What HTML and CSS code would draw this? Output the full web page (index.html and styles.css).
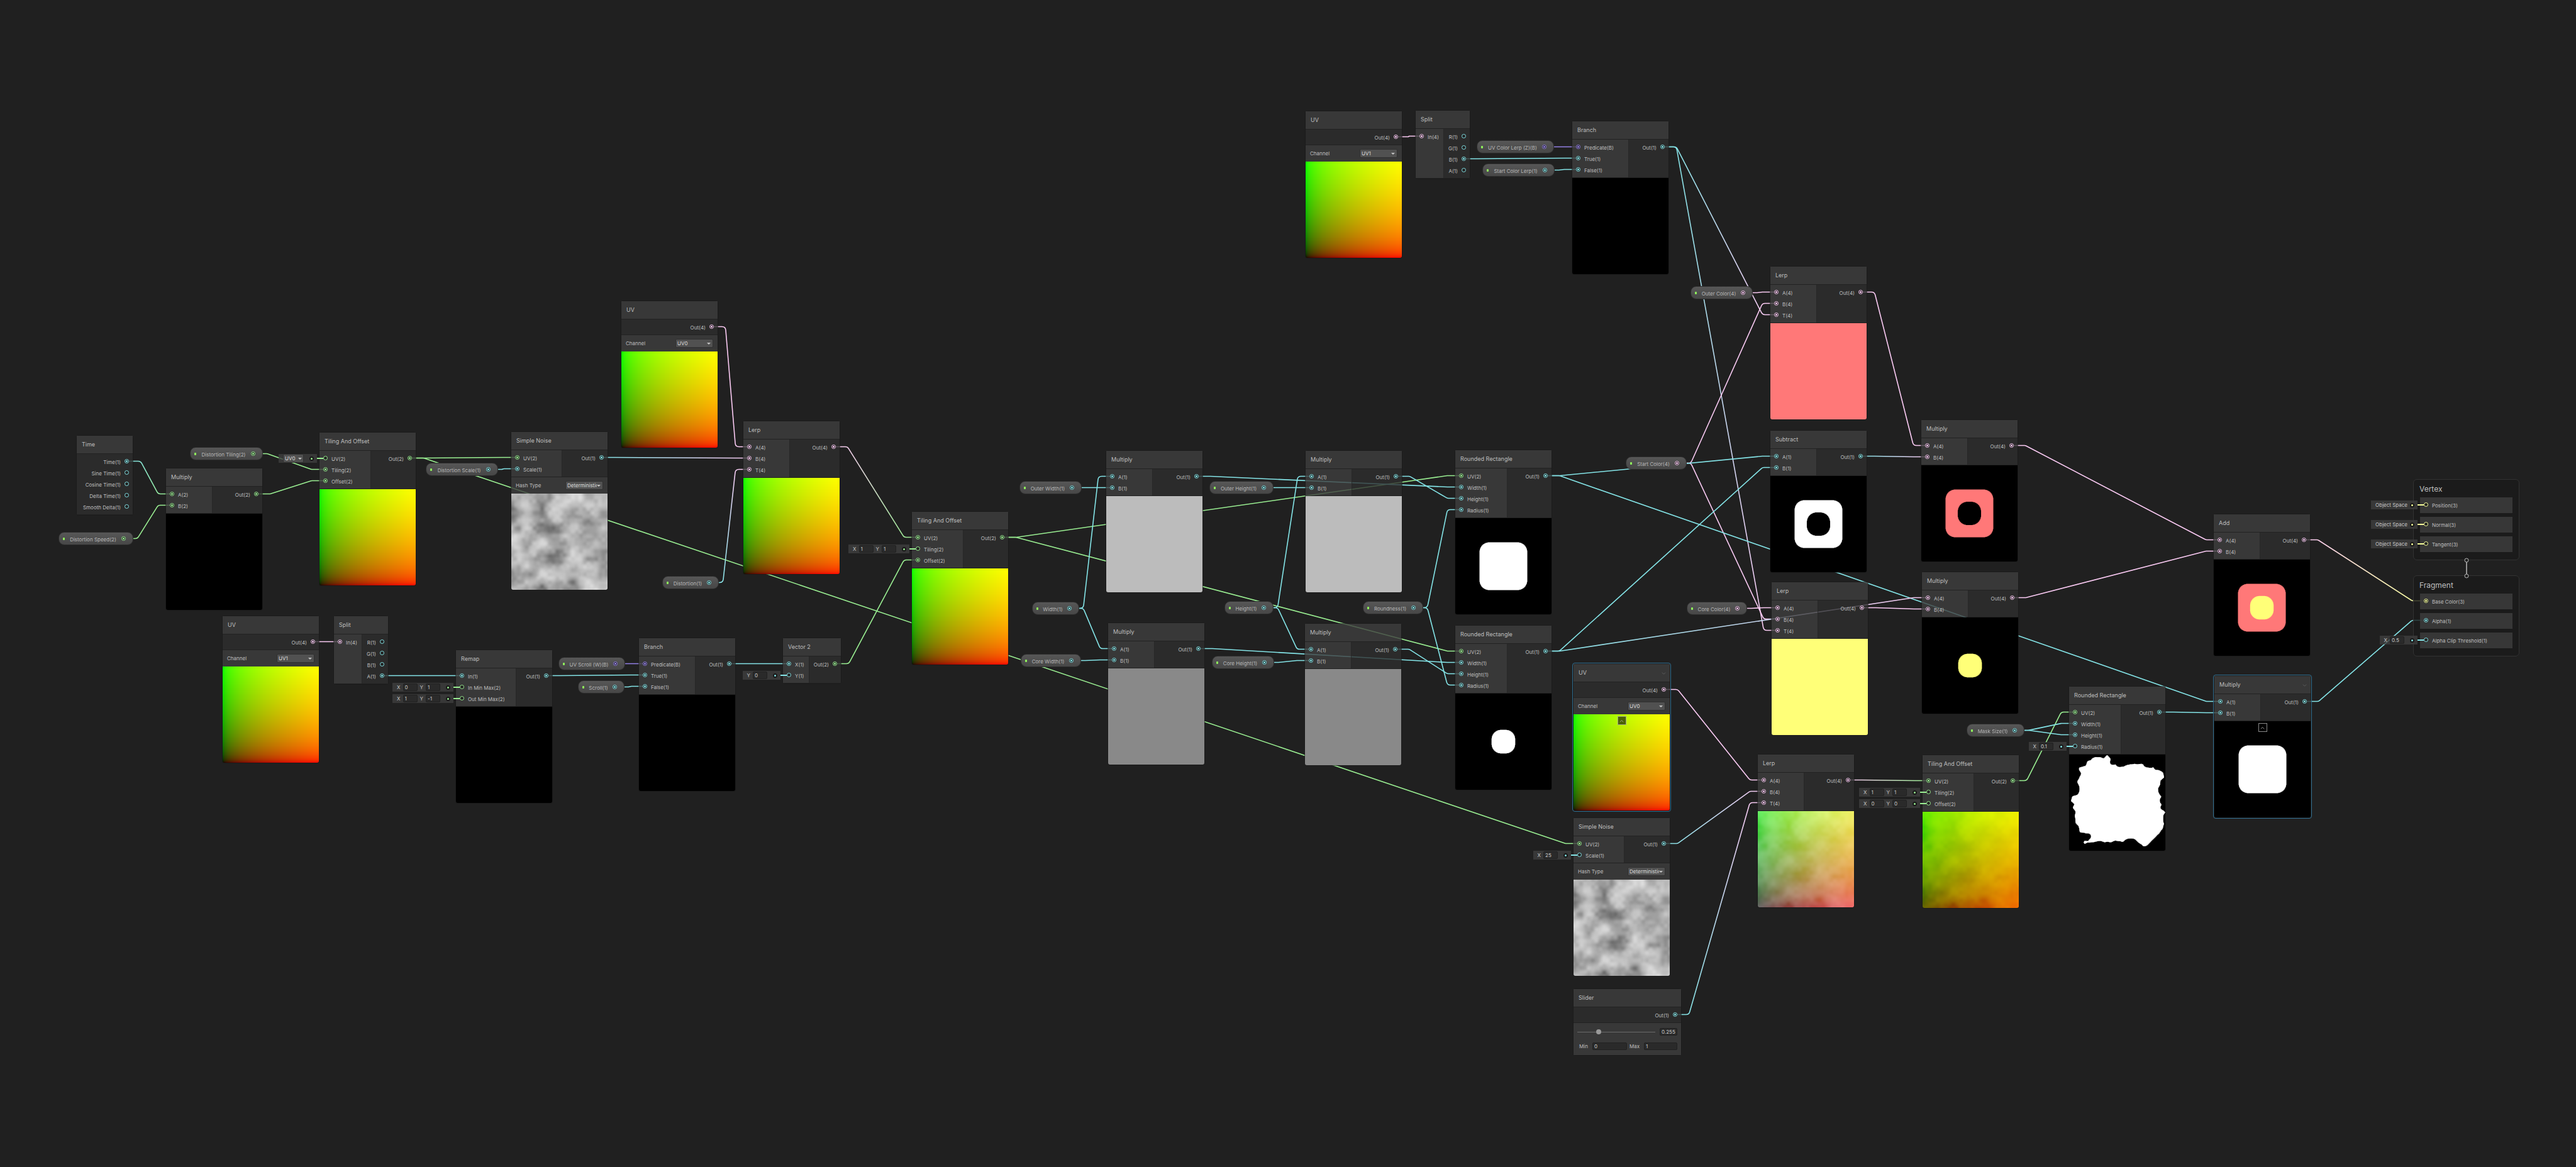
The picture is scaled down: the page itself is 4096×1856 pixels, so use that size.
FILE: index.html
```html
<!DOCTYPE html>
<html lang="en">
<head>
<meta charset="utf-8">
<meta name="viewport" content="width=device-width, initial-scale=1">
<title>Shader Graph</title>
<link rel="stylesheet" href="styles.css">
</head>
<body>
<main class="graph" id="graph">
  <svg class="edges" id="edges" aria-hidden="true"></svg>
  <svg class="edges stack-link" aria-hidden="true">
    <path d="M3922 894V913"/>
    <circle cx="3922" cy="891" r="3"/>
    <circle cx="3922" cy="916" r="3"/>
  </svg>
</main>
<script src="graph.js"></script>
</body>
</html>
```
FILE: styles.css
```css
* { box-sizing: border-box; }

body {
  margin: 0;
  background: #202020;
  color: #bebebe;
  font-family: Inter, "Liberation Sans", sans-serif;
  font-size: 8px;
  line-height: 18px;
}

.graph {
  position: relative;
  min-height: 100vh;
  overflow: hidden;
}

.edges {
  position: absolute;
  inset: 0;
  width: 100%;
  height: 100%;
}

.edges path { fill: none; stroke-width: 1.6; }

.stack-link {
  z-index: 1;
  fill: #202020;
  stroke: #b4b4b4;
  pointer-events: none;
}

/* port value types */
.type-1 { color: #84e4e7; }
.type-2 { color: #9aef92; }
.type-3 { color: #f6ff9a; }
.type-4 { color: #fbcbf4; }
.type-B { color: #9481e6; }

/* nodes */
.node {
  position: absolute;
  border-radius: 3px;
  box-shadow: 0 0 0 1px rgba(25, 25, 25, 0.6);
}

.node-title {
  display: flex;
  align-items: center;
  justify-content: space-between;
  height: 28px;
  margin: 0;
  padding: 0 6px 0 8px;
  background: rgba(63, 63, 63, 0.8);
  font-size: 9px;
  font-weight: 400;
}

.chevron {
  width: 7px;
  height: 7px;
  fill: none;
  stroke: #606060;
}

.node-body {
  display: flex;
  border-top: 1px solid rgba(35, 35, 35, 0.8);
  border-bottom: 1px solid rgba(35, 35, 35, 0.8);
}

.inputs, .outputs {
  flex: 1 1 auto;
  padding: 3px 6px;
}

.inputs {
  padding-right: 7px;
  background: rgba(63, 63, 63, 0.8);
  border-right: 1px solid rgba(35, 35, 35, 0.8);
}

.outputs { background: rgba(46, 46, 46, 0.8); }

.port {
  position: relative;
  display: flex;
  gap: 6px;
  height: 18px;
  white-space: nowrap;
}

.outputs .port { justify-content: flex-end; }
.port-name { padding-top: 1px; }

.pin {
  display: flex;
  align-items: center;
  justify-content: center;
  flex: none;
  width: 7px;
  height: 7px;
  margin-top: 5px;
  border: 1px solid currentColor;
  border-radius: 50%;
  background: #212121;
}

.pin.linked::after {
  content: "";
  width: 3px;
  height: 3px;
  border-radius: 50%;
  background: currentColor;
}

/* node settings */
.setting {
  display: flex;
  align-items: center;
  justify-content: space-between;
  height: 26px;
  padding: 0 7px;
  background: rgba(63, 63, 63, 0.8);
}

.dropdown {
  position: relative;
  display: flex;
  width: 60px;
}

.dropdown select {
  width: 100%;
  height: 14px;
  padding: 0 9px 0 2px;
  border: 1px solid #303030;
  border-radius: 2px;
  background: #515151;
  color: #dcdcdc;
  font: inherit;
  line-height: 12px;
  appearance: none;
}

.dropdown::after {
  content: "";
  position: absolute;
  top: 6px;
  right: 4px;
  border: 3px solid transparent;
  border-top-color: #c4c4c4;
  border-bottom: 0;
}

.field {
  width: 23px;
  height: 12px;
  padding: 0 2px;
  border: 1px solid #212121;
  border-radius: 2px;
  background: #2a2a2a;
  color: #c8c8c8;
  font: inherit;
  line-height: 10px;
}

.slider-settings {
  padding: 7px 6px;
  background: rgba(63, 63, 63, 0.8);
}

.slider-row, .range-row {
  display: flex;
  align-items: center;
  height: 14px;
}

.slider-row { gap: 7px; }
.slider-row .field { width: 28px; }
.range-row { gap: 4px; margin-top: 9px; padding-left: 3px; }
.range-row label { display: flex; align-items: center; flex: 1; gap: 7px; }
.range-row .field { flex: 1; min-width: 0; }

.slider {
  flex: 1;
  min-width: 0;
  height: 10px;
  margin: 0;
  background: transparent;
  appearance: none;
}

.slider::-webkit-slider-runnable-track {
  height: 1px;
  background: #6a6a6a;
}

.slider::-webkit-slider-thumb {
  width: 8px;
  height: 8px;
  margin-top: -4px;
  border-radius: 50%;
  background: #999;
  appearance: none;
}

/* previews */
.preview {
  position: relative;
  display: flex;
  justify-content: center;
}

.preview canvas {
  width: 100%;
  border-radius: 0 0 3px 3px;
}

.collapse {
  position: absolute;
  top: 3px;
  display: flex;
  align-items: center;
  justify-content: center;
  width: 14px;
  height: 14px;
  padding: 0;
  border: 1px solid rgba(196, 196, 196, 0.7);
  background: rgba(0, 0, 0, 0.6);
}

.collapse .chevron { stroke: #b0b0b0; }

.node.hovered::before {
  content: "";
  position: absolute;
  inset: -2px;
  border: 1px solid #2f6d8f;
  border-radius: 4px;
  pointer-events: none;
}

/* default values attached to unlinked inputs */
.default {
  position: absolute;
  top: 2px;
  right: 100%;
  display: flex;
  align-items: center;
  gap: 4px;
  height: 14px;
  margin-right: 10px;
  padding: 0 5px 0 7px;
  background: rgba(63, 63, 63, 0.8);
  color: #c4c4c4;
}

.default label { display: flex; align-items: center; gap: 4px; }
.default .dropdown { width: 33px; }
.default .dropdown::after { right: 3px; }
.default .socket {
  display: flex;
  align-items: center;
  justify-content: center;
  width: 7px;
  height: 7px;
  margin-left: 5px;
  border-radius: 50%;
  background: #181818;
}
.default .socket::after {
  content: "";
  width: 3px;
  height: 3px;
  border-radius: 50%;
  background: currentColor;
}
.default.text .socket { margin-left: 0; }
.default .wire {
  position: absolute;
  top: 6px;
  left: 100%;
  width: 10px;
  height: 2px;
  background: currentColor;
}

/* property pills */
.pill {
  position: absolute;
  display: flex;
  align-items: center;
  height: 21px;
  padding: 0 11px 0 6px;
  border: 1px solid #2c2c2c;
  border-radius: 9px;
  background: linear-gradient(#575757, #474747);
  color: #b8b8b8;
  white-space: nowrap;
}

.pill::before {
  content: "";
  width: 3px;
  height: 4px;
  border-radius: 1px;
  background: #8ff05c;
}

.pill-name { margin: 3px auto 0; }
.pill .pin { margin: 0; }

/* output contexts */
.context {
  position: absolute;
  display: flex;
  flex-direction: column;
  gap: 6px;
  width: 169px;
  padding: 0 10px 12px;
  border: 1px solid #323232;
  border-radius: 6px;
  background: rgba(26, 26, 26, 0.8);
}

.context-title {
  height: 28px;
  margin: 0 0 -6px;
  padding-top: 1px;
  font-size: 12px;
  font-weight: 400;
  line-height: 28px;
  text-indent: -1px;
}

.block {
  height: 25px;
  padding: 3px 6px;
  background: rgba(63, 63, 63, 0.8);
}
```
FILE: graph.js
```js
const UV_IN = ["UV", 2];
const AB = t => [["A", t], ["B", t]];
const ABT = t => [["A", t], ["B", t], ["T", t]];
const OUT = t => [["Out", t]];
const RECT_IN = [["UV", 2], ["Width", 1], ["Height", 1], ["Radius", 1]];
const RGBA = [["R", 1], ["G", 1], ["B", 1], ["A", 1]];
const xy = (x, y) => ({ fields: [["X", x], ["Y", y]] });

const nodes = [
  { id: "time", title: "Time", x: 122, y: 693, w: 89, ins: [], outs: [["Time", 1], ["Sine Time", 1], ["Cosine Time", 1], ["Delta Time", 1], ["Smooth Delta", 1]] },
  { id: "mulSpeed", title: "Multiply", x: 264, y: 745, ins: AB(2), outs: OUT(2), preview: "black" },
  { id: "tile1", title: "Tiling And Offset", x: 508, y: 688, ins: [["UV", 2, { select: "UV0" }], ["Tiling", 2], ["Offset", 2]], outs: OUT(2), preview: "uv" },
  { id: "uvMask", title: "UV", x: 354, y: 980, ins: [], outs: OUT(4), setting: ["Channel", "UV1"], preview: "uv" },
  { id: "split1", title: "Split", x: 531, y: 980, w: 86, ins: [["In", 4]], outs: RGBA },
  { id: "remap", title: "Remap", x: 725, y: 1034, ins: [["In", 1], ["In Min Max", 2, xy("0", "1")], ["Out Min Max", 2, xy("1", "-1")]], outs: OUT(1), preview: "black" },
  { id: "uv0", title: "UV", x: 988, y: 479, ins: [], outs: OUT(4), setting: ["Channel", "UV0"], preview: "uv" },
  { id: "noise1", title: "Simple Noise", x: 813, y: 687, ins: [UV_IN, ["Scale", 1]], outs: OUT(1), setting: ["Hash Type", "Deterministic"], preview: "noise" },
  { id: "lerpUv", title: "Lerp", x: 1182, y: 670, ins: ABT(4), outs: OUT(4), preview: "uv" },
  { id: "tile2", title: "Tiling And Offset", x: 1450, y: 814, ins: [UV_IN, ["Tiling", 2, xy("1", "1")], ["Offset", 2]], outs: OUT(2), preview: "uv" },
  { id: "branch1", title: "Branch", x: 1016, y: 1015, ins: [["Predicate", "B"], ["True", 1], ["False", 1]], outs: OUT(1), preview: "black" },
  { id: "vec2", title: "Vector 2", x: 1245, y: 1015, w: 92, ins: [["X", 1], ["Y", 1, { fields: [["Y", "0"]] }]], outs: OUT(2) },
  { id: "mul1", title: "Multiply", x: 1759, y: 717, ins: AB(1), outs: OUT(1), preview: "half" },
  { id: "mul2", title: "Multiply", x: 2076, y: 717, ins: AB(1), outs: OUT(1), preview: "half" },
  { id: "mul3", title: "Multiply", x: 1762, y: 991, ins: AB(1), outs: OUT(1), preview: "quarter" },
  { id: "mul4", title: "Multiply", x: 2075, y: 992, ins: AB(1), outs: OUT(1), preview: "quarter" },
  { id: "uvTop", title: "UV", x: 2076, y: 177, ins: [], outs: OUT(4), setting: ["Channel", "UV1"], preview: "uv" },
  { id: "split2", title: "Split", x: 2251, y: 176, w: 86, ins: [["In", 4]], outs: RGBA },
  { id: "branch2", title: "Branch", x: 2500, y: 193, ins: [["Predicate", "B"], ["True", 1], ["False", 1]], outs: OUT(1), preview: "black" },
  { id: "rect1", title: "Rounded Rectangle", x: 2314, y: 716, ins: RECT_IN, outs: OUT(1), preview: "outer" },
  { id: "rect2", title: "Rounded Rectangle", x: 2314, y: 995, ins: RECT_IN, outs: OUT(1), preview: "core" },
  { id: "uvHover", title: "UV", x: 2502, y: 1056, ins: [], outs: OUT(4), setting: ["Channel", "UV0"], preview: "uv", hovered: true },
  { id: "lerpOuter", title: "Lerp", x: 2815, y: 424, ins: ABT(4), outs: OUT(4), preview: "red" },
  { id: "subtract", title: "Subtract", x: 2815, y: 685, ins: AB(1), outs: OUT(1), preview: "ring" },
  { id: "lerpCore", title: "Lerp", x: 2817, y: 926, ins: ABT(4), outs: OUT(4), preview: "yellow" },
  { id: "mul5", title: "Multiply", x: 3055, y: 668, ins: AB(4), outs: OUT(4), preview: "redRing" },
  { id: "mul6", title: "Multiply", x: 3056, y: 910, ins: AB(4), outs: OUT(4), preview: "yellowCore" },
  { id: "noise2", title: "Simple Noise", x: 2502, y: 1301, ins: [UV_IN, ["Scale", 1, { fields: [["X", "25"]] }]], outs: OUT(1), setting: ["Hash Type", "Deterministic"], preview: "noise" },
  { id: "lerpNoise", title: "Lerp", x: 2795, y: 1200, ins: ABT(4), outs: OUT(4), preview: "lerpNoise" },
  { id: "slider", title: "Slider", x: 2502, y: 1573, w: 171, ins: [], outs: OUT(1), slider: true },
  { id: "tile3", title: "Tiling And Offset", x: 3057, y: 1201, ins: [UV_IN, ["Tiling", 2, xy("1", "1")], ["Offset", 2, xy("0", "0")]], outs: OUT(2), preview: "tiledNoise" },
  { id: "rect3", title: "Rounded Rectangle", x: 3290, y: 1092, ins: [...RECT_IN.slice(0, 3), ["Radius", 1, { fields: [["X", "0.1"]] }]], outs: OUT(1), preview: "mask" },
  { id: "mulAlpha", title: "Multiply", x: 3521, y: 1075, ins: AB(1), outs: OUT(1), preview: "outer", hovered: true },
  { id: "add", title: "Add", x: 3520, y: 818, ins: AB(4), outs: OUT(4), preview: "sum" }
];

const pills = [
  ["distTiling", "Distortion Tiling", 2, 302, 711, 116],
  ["distSpeed", "Distortion Speed", 2, 93, 846, 119],
  ["distScale", "Distortion Scale", 1, 677, 736, 115],
  ["distortion", "Distortion", 1, 1053, 916, 90],
  ["uvScroll", "UV Scroll (W)", "B", 888, 1045, 106],
  ["scroll", "Scroll", 1, 919, 1082, 74],
  ["outerW", "Outer Width", 1, 1621, 765, 99],
  ["outerH", "Outer Height", 1, 1923, 765, 102],
  ["width", "Width", 1, 1641, 957, 75],
  ["height", "Height", 1, 1947, 956, 78],
  ["coreW", "Core Width", 1, 1623, 1040, 96],
  ["coreH", "Core Height", 1, 1927, 1043, 99],
  ["uvLerp", "UV Color Lerp (Z)", "B", 2348, 223, 123],
  ["startLerp", "Start Color Lerp", 1, 2357, 260, 115],
  ["startColor", "Start Color", 4, 2585, 726, 97],
  ["roundness", "Roundness", 1, 2167, 956, 96],
  ["outerColor", "Outer Color", 4, 2688, 455, 99],
  ["coreColor", "Core Color", 4, 2682, 957, 96],
  ["maskSize", "Mask Size", 1, 3127, 1151, 92]
];

const space = { text: "Object Space" };
const contexts = [
  { id: "vertex", title: "Vertex", x: 3837, y: 762, blocks: [["Position", 3, space], ["Normal", 3, space], ["Tangent", 3, space]] },
  { id: "fragment", title: "Fragment", x: 3837, y: 915, blocks: [["Base Color", 3], ["Alpha", 1], ["Alpha Clip Threshold", 1, { fields: [["X", "0.5"]] }]] }
];

const links = `
time:0>mulSpeed:0 distSpeed:0>mulSpeed:1 mulSpeed:0>tile1:2 distTiling:0>tile1:1
tile1:0>noise1:0 tile1:0>noise2:0 distScale:0>noise1:1 uv0:0>lerpUv:0 noise1:0>lerpUv:1 distortion:0>lerpUv:2
uvMask:0>split1:0 split1:3>remap:0 remap:0>branch1:1 uvScroll:0>branch1:0 scroll:0>branch1:2
branch1:0>vec2:0 vec2:0>tile2:2 lerpUv:0>tile2:0 tile2:0>rect1:0 tile2:0>rect2:0
width:0>mul1:0 width:0>mul3:0 outerW:0>mul1:1 coreW:0>mul3:1
height:0>mul2:0 height:0>mul4:0 outerH:0>mul2:1 coreH:0>mul4:1
mul1:0>rect1:1 mul2:0>rect1:2 mul3:0>rect2:1 mul4:0>rect2:2 roundness:0>rect1:3 roundness:0>rect2:3
uvTop:0>split2:0 split2:2>branch2:1 uvLerp:0>branch2:0 startLerp:0>branch2:2
branch2:0>lerpOuter:2 branch2:0>lerpCore:2 outerColor:0>lerpOuter:0 startColor:0>lerpOuter:1
startColor:0>lerpCore:1 coreColor:0>lerpCore:0
rect1:0>subtract:0 rect2:0>subtract:1 rect1:0>mulAlpha:0 rect2:0>mul6:0
lerpOuter:0>mul5:0 subtract:0>mul5:1 lerpCore:0>mul6:1 mul5:0>add:0 mul6:0>add:1
uvHover:0>lerpNoise:0 noise2:0>lerpNoise:1 slider:0>lerpNoise:2 lerpNoise:0>tile3:0
tile3:0>rect3:0 maskSize:0>rect3:1 maskSize:0>rect3:2 rect3:0>mulAlpha:1
add:0>fragment:0 mulAlpha:0>fragment:1
`.trim().split(/\s+/).map(l => {
  const [a, b] = l.split(">");
  return [a.replace(":", "-out"), b.replace(":", "-in")];
});
const linked = new Set(links.flat());

/* ---- markup ---- */

const pin = (id, type) => `<span class="pin type-${type}${linked.has(id) ? " linked" : ""}" id="${id}" data-type="${type}"></span>`;
const chevron = up => `<svg class="chevron" viewBox="0 0 8 8" aria-hidden="true"><path d="${up ? "M1 6L4 3L7 6" : "M1 3L4 6L7 3"}"/></svg>`;
const dropdown = (value, label) => `<span class="dropdown"><select aria-label="${label}"><option>${value}</option></select></span>`;

function defaultValue(d, name, type) {
  let inner;
  if (d.fields) inner = d.fields.map(([axis, v]) => `<label>${axis}<input class="field" value="${v}"></label>`).join("");
  else if (d.select) inner = dropdown(d.select, name);
  else inner = `<span>${d.text}</span>`;
  return `<div class="default${d.text ? " text" : ""}">${inner}<span class="socket type-${type}"></span><span class="wire type-${type}"></span></div>`;
}

const input = (id, [name, type, d], i) =>
  `<div class="port">${d ? defaultValue(d, name, type) : ""}${pin(`${id}-in${i}`, type)}<span class="port-name">${name}(${type})</span></div>`;
const output = (id, [name, type], i) =>
  `<div class="port"><span class="port-name">${name}(${type})</span>${pin(`${id}-out${i}`, type)}</div>`;

const sliderSettings = `<div class="slider-settings">
  <div class="slider-row"><input class="slider" type="range" min="0" max="1" step="0.001" value="0.255" aria-label="Value"><input class="field" value="0.255" aria-label="Value"></div>
  <div class="range-row"><label>Min<input class="field" value="0"></label><label>Max<input class="field" value="1"></label></div>
</div>`;

const nodeMarkup = n => `<section class="node${n.hovered ? " hovered" : ""}" style="left:${n.x}px;top:${n.y}px;width:${n.w || 153}px">
  <h2 class="node-title">${n.title}${n.hovered ? chevron(false) : ""}</h2>
  <div class="node-body">
    ${n.ins.length ? `<div class="inputs">${n.ins.map((p, i) => input(n.id, p, i)).join("")}</div>` : ""}
    <div class="outputs">${n.outs.map((p, i) => output(n.id, p, i)).join("")}</div>
  </div>
  ${n.setting ? `<div class="setting"><span>${n.setting[0]}</span>${dropdown(n.setting[1], n.setting[0])}</div>` : ""}
  ${n.slider ? sliderSettings : ""}
  ${n.preview ? `<div class="preview"><canvas width="153" height="153" data-preview="${n.preview}"></canvas>${n.hovered ? `<button class="collapse" aria-label="Collapse preview">${chevron(true)}</button>` : ""}</div>` : ""}
</section>`;

const pillMarkup = ([id, name, type, x, y, w]) =>
  `<div class="pill" style="left:${x}px;top:${y}px;width:${w}px"><span class="pill-name">${name}(${type})</span>${pin(`${id}-out0`, type)}</div>`;

const contextMarkup = c => `<section class="context" id="${c.id}" style="left:${c.x}px;top:${c.y}px">
  <h2 class="context-title">${c.title}</h2>
  ${c.blocks.map((b, i) => `<div class="block">${input(c.id, b, i)}</div>`).join("")}
</section>`;

const graph = document.getElementById("graph");
graph.insertAdjacentHTML("beforeend",
  contexts.map(contextMarkup).join("") + nodes.map(nodeMarkup).join("") + pills.map(pillMarkup).join(""));

/* ---- previews ---- */

const mix = (a, b, t) => a + (b - a) * t;
const clamp = v => Math.min(1, Math.max(0, v));
const toByte = v => {
  v = clamp(v);
  return 255 * (v <= 0.0031308 ? v * 12.92 : 1.055 * Math.pow(v, 1 / 2.4) - 0.055);
};

function hash(x, y) {
  y ^= 1103515245;
  x = (x + y) | 0;
  x = Math.imul(x, y);
  x ^= x >>> 5;
  x = Math.imul(x, 0x27d4eb2d);
  return (x >>> 8) / 0xffffff;
}

function valueNoise(x, y) {
  const ix = Math.floor(x), iy = Math.floor(y);
  let fx = x - ix, fy = y - iy;
  fx = fx * fx * (3 - 2 * fx);
  fy = fy * fy * (3 - 2 * fy);
  return mix(mix(hash(ix, iy), hash(ix + 1, iy), fx), mix(hash(ix, iy + 1), hash(ix + 1, iy + 1), fx), fy);
}

function simpleNoise(u, v, scale) {
  let sum = 0;
  for (let i = 0; i < 3; i++) {
    const s = scale / 2 ** i;
    sum += valueNoise(u * s, v * s) * 0.5 ** (3 - i);
  }
  return sum;
}

const warp = (u, v) => {
  const n = simpleNoise(u, v, 25) * 0.255;
  return [u * 0.745 + n, v * 0.745 + n, n];
};

function roundedRect(u, v, size, radius, map = (a, b) => [a, b]) {
  const r = Math.min(radius * 2, size);
  const dist = (a, b) => {
    const [x, y] = map(a, b);
    return Math.hypot(Math.max(0, Math.abs(x * 2 - 1) - size + r), Math.max(0, Math.abs(y * 2 - 1) - size + r)) / r;
  };
  const d = dist(u, v), px = 1 / 153;
  const fw = Math.abs(dist(u + px, v) - d) + Math.abs(dist(u, v + px) - d) || 1e-5;
  return clamp((1 - d) / fw);
}

const RED = [1, 0.188, 0.188], YELLOW = [1, 1, 0.188];
const tint = (c, k) => c.map(v => v * k);
const grey = k => [k, k, k];
const outer = (u, v) => roundedRect(u, v, 0.5, 0.1);
const core = (u, v) => roundedRect(u, v, 0.25, 0.1);
const ring = (u, v) => clamp(outer(u, v) - core(u, v));

const previews = {
  black: () => [0, 0, 0],
  uv: (u, v) => [u, v, 0],
  half: () => grey(0.5),
  quarter: () => grey(0.25),
  red: () => RED,
  yellow: () => YELLOW,
  noise: (u, v) => grey(simpleNoise(u, v, 25)),
  outer: (u, v) => grey(outer(u, v)),
  core: (u, v) => grey(core(u, v)),
  ring: (u, v) => grey(ring(u, v)),
  redRing: (u, v) => tint(RED, ring(u, v)),
  yellowCore: (u, v) => tint(YELLOW, core(u, v)),
  sum: (u, v) => {
    const a = tint(RED, ring(u, v)), b = tint(YELLOW, core(u, v));
    return a.map((c, i) => c + b[i]);
  },
  lerpNoise: warp,
  tiledNoise: (u, v) => [...warp(u, v).slice(0, 2), 0],
  mask: (u, v) => grey(roundedRect(u, v, 0.625, 0.1, warp))
};

for (const canvas of document.querySelectorAll("canvas")) {
  const ctx = canvas.getContext("2d");
  const { width: w, height: h } = canvas;
  const image = ctx.createImageData(w, h);
  const shade = previews[canvas.dataset.preview];
  for (let y = 0, o = 0; y < h; y++) {
    for (let x = 0; x < w; x++) {
      const c = shade((x + 0.5) / w, 1 - (y + 0.5) / h);
      image.data[o++] = toByte(c[0]);
      image.data[o++] = toByte(c[1]);
      image.data[o++] = toByte(c[2]);
      image.data[o++] = 255;
    }
  }
  ctx.putImageData(image, 0, 0);
}

/* ---- edges ---- */

const TYPE_COLORS = { 1: "#84e4e7", 2: "#9aef92", 3: "#f6ff9a", 4: "#fbcbf4", B: "#9481e6" };
const origin = graph.getBoundingClientRect();
const center = el => {
  const r = el.getBoundingClientRect();
  return [r.left - origin.left + r.width / 2, r.top - origin.top + r.height / 2];
};

/* horizontal lead, slanted run, horizontal lead, with corners of radius 6 */
function edgePath([x1, y1], [x2, y2]) {
  const lead = Math.min(22, (x2 - x1) / 2);
  const ax = x1 + lead, bx = x2 - lead;
  const len = Math.hypot(bx - ax, y2 - y1) || 1;
  const angle = Math.atan2(Math.abs(y2 - y1), bx - ax);
  const r = Math.min(6 * Math.tan(angle / 2), len / 2);
  const dx = (bx - ax) / len * r, dy = (y2 - y1) / len * r;
  return `M${x1} ${y1}L${ax - r} ${y1}Q${ax} ${y1} ${ax + dx} ${y1 + dy}L${bx - dx} ${y2 - dy}Q${bx} ${y2} ${bx + r} ${y2}L${x2} ${y2}`;
}

let markup = "";
links.forEach(([from, to], i) => {
  const a = document.getElementById(from), b = document.getElementById(to);
  const p = center(a), q = center(b);
  const ta = a.dataset.type, tb = b.dataset.type;
  let stroke = TYPE_COLORS[ta];
  if (ta !== tb) {
    markup += `<linearGradient id="g${i}" gradientUnits="userSpaceOnUse" x1="${p[0]}" y1="${p[1]}" x2="${q[0]}" y2="${q[1]}"><stop stop-color="${TYPE_COLORS[ta]}"/><stop offset="1" stop-color="${TYPE_COLORS[tb]}"/></linearGradient>`;
    stroke = `url(#g${i})`;
  }
  markup += `<path d="${edgePath(p, q)}" stroke="${stroke}"/>`;
});
document.getElementById("edges").innerHTML = markup;
```
